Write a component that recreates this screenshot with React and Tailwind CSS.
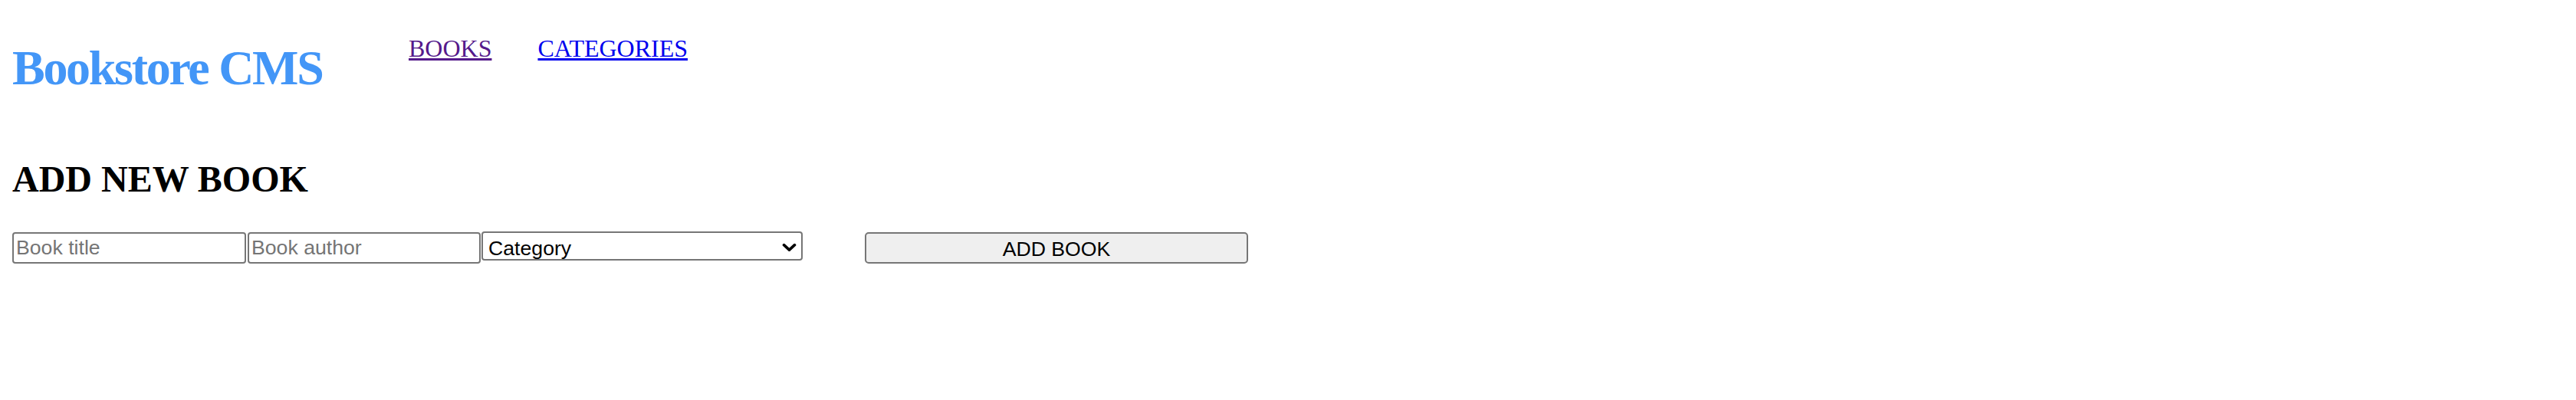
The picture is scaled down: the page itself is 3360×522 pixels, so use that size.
const Header = () => (
  <header className="flex items-start">
    <h1 className="mt-[57px] w-[405px] shrink-0 whitespace-nowrap text-[64px] leading-[64px] font-bold tracking-[-2.3px] text-[#4396f7]">
      Bookstore CMS
    </h1>
    <nav className="ml-[112px] mt-[47px]">
      <ul className="flex gap-[60px] text-[32px] leading-[32px]">
        <li>
          <a href="#books" className="text-[#551a8b] underline">BOOKS</a>
        </li>
        <li>
          <a href="#categories" className="text-[#0000ee] underline">CATEGORIES</a>
        </li>
      </ul>
    </nav>
  </header>
);

const AddBook = () => (
  <section>
    <h2 className="mt-[89px] text-[48px] leading-[48px] font-bold text-black">ADD NEW BOOK</h2>
    <form className="mt-[44px] flex items-center font-['Liberation_Sans',Arial,sans-serif] text-[26.67px] text-black">
      <input
        type="text"
        placeholder="Book title"
        className="w-[305px] h-[41px] border-2 border-[#767676] rounded-[4px] bg-white px-[3px] placeholder:text-[#757575]"
      />
      <input
        type="text"
        placeholder="Book author"
        className="ml-[2px] w-[304px] h-[41px] border-2 border-[#767676] rounded-[4px] bg-white px-[3px] placeholder:text-[#757575]"
      />
      <div className="relative ml-[1px] w-[419px]">
        <select
          defaultValue=""
          className="w-full h-[38px] appearance-none border-2 border-[#767676] rounded-[4px] bg-white pl-[7px] text-black"
        >
          <option value="">Category</option>
          <option value="fiction">Fiction</option>
          <option value="science">Science</option>
        </select>
        <svg
          className="pointer-events-none absolute right-[8px] top-1/2 -translate-y-1/2"
          width="19"
          height="11"
          viewBox="0 0 19 11"
          fill="none"
        >
          <path d="M2.5 2.2 L9.5 8.6 L16.5 2.2" stroke="#000" strokeWidth="3.6" strokeLinecap="round" strokeLinejoin="round" />
        </svg>
      </div>
      <button
        type="button"
        className="ml-[81px] w-[500px] h-[41px] border-2 border-[#767676] rounded-[5px] bg-[#efefef] text-black"
      >
        ADD BOOK
      </button>
    </form>
  </section>
);

export default function App() {
  return (
    <div className="min-h-[522px] bg-white px-4 font-['Liberation_Serif','Times_New_Roman',serif] text-black">
      <Header />
      <AddBook />
    </div>
  );
}
